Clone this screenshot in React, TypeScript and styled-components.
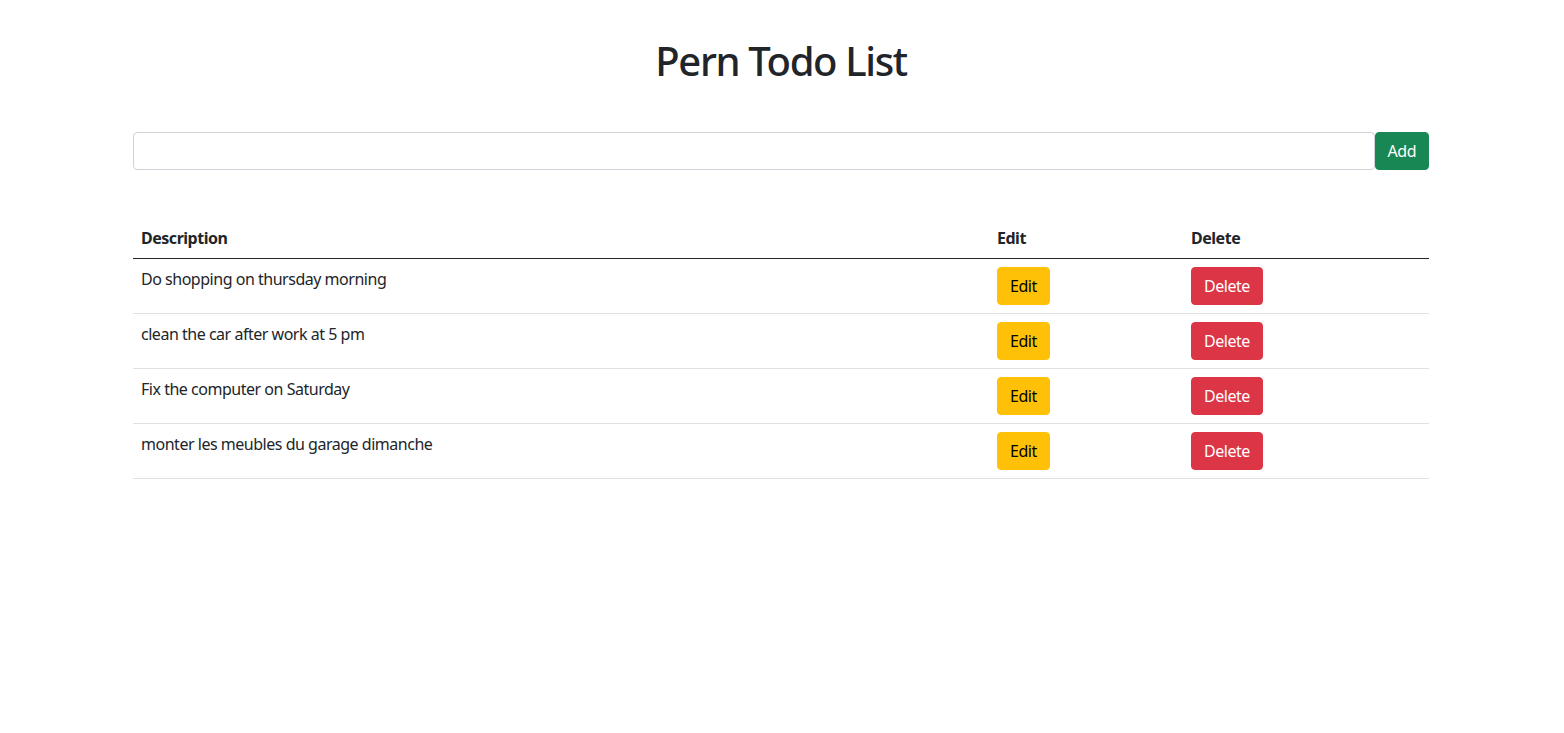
import React, { useState } from 'react'
import styled, { createGlobalStyle } from 'styled-components'

const GlobalStyle = createGlobalStyle`
  *, *::before, *::after {
    box-sizing: border-box;
  }
  body {
    margin: 0;
    background: #fff;
    color: #212529;
    font-family: "Noto Sans", "Open Sans", "Liberation Sans", sans-serif;
    font-size: 16px;
    line-height: 1.5;
    letter-spacing: -0.03em;
  }
`

const Container = styled.div`
  width: 1320px;
  max-width: 100%;
  margin: 0 auto;
  padding: 0 13px 0 11px;
`

const Title = styled.h1`
  margin: 37px 0 8px;
  font-size: 40px;
  font-weight: 500;
  line-height: 1.2;
  letter-spacing: -0.034em;
  text-align: center;
`

const AddForm = styled.form`
  display: flex;
  margin-top: 47px;
`

const TextInput = styled.input`
  flex: 1;
  height: 38px;
  padding: 6px 12px;
  font: inherit;
  color: #212529;
  background: #fff;
  border: 1px solid #ced4da;
  border-radius: 4px;
  outline: none;
`

const Button = styled.button<{ $variant: 'success' | 'warning' | 'danger' }>`
  display: inline-block;
  height: 38px;
  padding: 6px 12px;
  font: inherit;
  line-height: 1.5;
  letter-spacing: inherit;
  border: 1px solid transparent;
  border-radius: 4px;
  cursor: pointer;
  background: ${(p) =>
    p.$variant === 'success' ? '#198754' : p.$variant === 'warning' ? '#ffc107' : '#dc3545'};
  border-color: ${(p) =>
    p.$variant === 'success' ? '#198754' : p.$variant === 'warning' ? '#ffc107' : '#dc3545'};
  color: ${(p) => (p.$variant === 'warning' ? '#000' : '#fff')};
`

const Table = styled.table`
  width: 100%;
  margin-top: 48px;
  border-collapse: collapse;
  color: #212529;
`

const HeadCell = styled.th<{ $width?: number }>`
  width: ${(p) => (p.$width ? `${p.$width}px` : 'auto')};
  padding: 8px;
  text-align: left;
  font-weight: 700;
  border-bottom: 1px solid #212529;
`

const Cell = styled.td`
  padding: 8px;
  vertical-align: top;
  border-bottom: 1px solid #dee2e6;
`

const initialTodos = [
  { id: 1, description: 'Do shopping on thursday morning' },
  { id: 2, description: 'clean the car after work at 5 pm' },
  { id: 3, description: 'Fix the computer on Saturday' },
  { id: 4, description: 'monter les meubles du garage dimanche' },
]

const App: React.FC = () => {
  const [description, setDescription] = useState('')
  const [todos, setTodos] = useState(initialTodos)

  const handleSubmit = (e: React.FormEvent) => {
    e.preventDefault()
    if (!description.trim()) return
    setTodos([...todos, { id: Date.now(), description }])
    setDescription('')
  }

  const handleDelete = (id: number) => {
    setTodos(todos.filter((todo) => todo.id !== id))
  }

  return (
    <>
      <GlobalStyle />
      <Container>
        <Title>Pern Todo List</Title>
        <AddForm onSubmit={handleSubmit}>
          <TextInput
            type="text"
            value={description}
            onChange={(e) => setDescription(e.currentTarget.value)}
          />
          <Button $variant="success" type="submit">Add</Button>
        </AddForm>
        <Table>
          <thead>
            <tr>
              <HeadCell $width={856}>Description</HeadCell>
              <HeadCell $width={194}>Edit</HeadCell>
              <HeadCell>Delete</HeadCell>
            </tr>
          </thead>
          <tbody>
            {todos.map((todo) => (
              <tr key={todo.id}>
                <Cell>{todo.description}</Cell>
                <Cell>
                  <Button $variant="warning" type="button">Edit</Button>
                </Cell>
                <Cell>
                  <Button $variant="danger" type="button" onClick={() => handleDelete(todo.id)}>
                    Delete
                  </Button>
                </Cell>
              </tr>
            ))}
          </tbody>
        </Table>
      </Container>
    </>
  )
}

export default App
